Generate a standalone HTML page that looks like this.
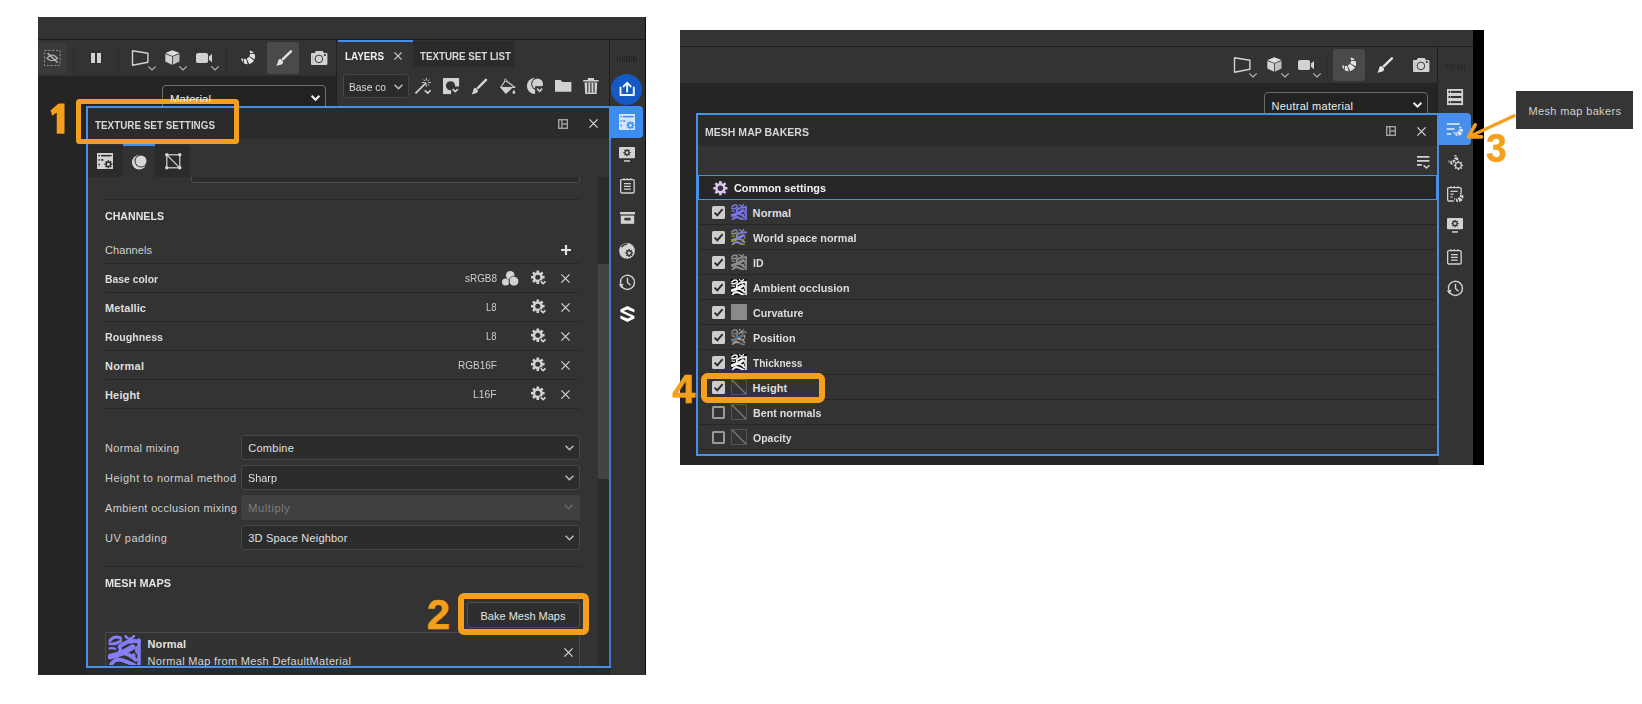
<!DOCTYPE html>
<html>
<head>
<meta charset="utf-8">
<title>Bake mesh maps</title>
<style>
html,body{margin:0;padding:0;background:#fff;}
body{width:1642px;height:704px;position:relative;overflow:hidden;font-family:"Liberation Sans",sans-serif;font-size:11px;color:#ccc;}
.a{position:absolute;}
.t{position:absolute;white-space:nowrap;line-height:14px;height:14px;font-size:11px;color:#cfcfcf;}
.b{font-weight:bold;}
svg{position:absolute;overflow:visible;}
.dd{position:absolute;box-sizing:border-box;background:#2b2b2b;border:1px solid #474747;border-radius:3px;}
.or{position:absolute;box-sizing:border-box;border:5px solid #f5a01d;border-radius:5px;}
.num{position:absolute;color:#f5a01d;font-weight:bold;white-space:nowrap;}
</style>
</head>
<body>
<!-- ================= LEFT SCREENSHOT ================= -->
<div class="a" style="left:38px;top:17px;width:608px;height:658px;background:#252525;"></div>
<div class="a" style="left:38px;top:17px;width:608px;height:23px;background:#333333;"></div>
<div class="a" style="left:38px;top:39px;width:608px;height:1px;background:#1c1c1c;"></div>
<div class="a" style="left:38px;top:40px;width:299px;height:36px;background:#333333;"></div>
<div class="a" style="left:337px;top:40px;width:273px;height:67px;background:#333333;"></div>
<div class="a" style="left:336px;top:40px;width:1px;height:67px;background:#202020;"></div>
<div class="a" style="left:610px;top:40px;width:36px;height:635px;background:#333333;"></div>
<div class="a" style="left:609px;top:40px;width:1px;height:67px;background:#1e1e1e;"></div>
<div class="a" style="left:645px;top:17px;width:1px;height:658px;background:#0c0c0c;"></div>
<div class="a" style="left:38px;top:42px;width:29px;height:32px;background:#3a3a3a;border-radius:0 3px 3px 0;"></div>
<svg style="left:44px;top:50px;" width="17" height="16" viewBox="0 0 17 16"><rect x="0.5" y="0.5" width="15.6" height="15" fill="none" stroke="#8c8c8c" stroke-width="1" stroke-dasharray="2.2 1.6"/><path d="M3 8.2 Q8.2 2.2 13.4 8.2 Q8.2 13 3 8.2 Z" fill="none" stroke="#adadad" stroke-width="1.3"/><path d="M3.6 3.2 L13.6 12.6" stroke="#bdbdbd" stroke-width="1.4"/></svg>
<div class="a" style="left:73px;top:47px;width:1px;height:24px;background:#2a2a2a;"></div>
<div class="a" style="left:91px;top:53px;width:4px;height:10px;background:#d2d2d2;"></div>
<div class="a" style="left:97px;top:53px;width:4px;height:10px;background:#d2d2d2;"></div>
<div class="a" style="left:118px;top:47px;width:1px;height:24px;background:#2a2a2a;"></div>
<svg style="left:131px;top:50px;" width="18" height="16" viewBox="0 0 18 16"><path d="M1.5 0.8 L16.9 3.3 L16.9 12.3 L1.5 15.2 Z" fill="none" stroke="#d2d2d2" stroke-width="1.4" stroke-linejoin="round"/></svg>
<svg style="left:148px;top:66px;" width="8" height="4.5" viewBox="0 0 8 4.5"><path d="M0.3 0.3 L4 4 L7.7 0.3" fill="none" stroke="#b8b8b8" stroke-width="1.1"/></svg>
<svg style="left:165px;top:50px;" width="15" height="15" viewBox="0 0 15 15"><path d="M7.4 0.3 L14.5 3.1 L7.4 5.9 L0.3 3.1 Z" fill="#dedede"/><path d="M0.3 3.9 L7 6.6 L7 14.7 L0.3 11.5 Z" fill="#d2d2d2"/><path d="M14.5 3.9 L7.8 6.6 L7.8 14.7 L14.5 11.5 Z" fill="#c0c0c0"/></svg>
<svg style="left:179.4px;top:66px;" width="8" height="4.5" viewBox="0 0 8 4.5"><path d="M0.3 0.3 L4 4 L7.7 0.3" fill="none" stroke="#b8b8b8" stroke-width="1.1"/></svg>
<svg style="left:196px;top:52px;" width="17" height="12" viewBox="0 0 17 12"><rect x="0" y="0.9" width="12.1" height="10.2" rx="2.2" fill="#d2d2d2"/><path d="M13 4.6 L16 2 V10.2 L13 7.8 Z" fill="#d2d2d2"/></svg>
<svg style="left:211.2px;top:66px;" width="8" height="4.5" viewBox="0 0 8 4.5"><path d="M0.3 0.3 L4 4 L7.7 0.3" fill="none" stroke="#b8b8b8" stroke-width="1.1"/></svg>
<div class="a" style="left:225.5px;top:47px;width:1px;height:24px;background:#2a2a2a;"></div>
<svg style="left:240px;top:50px;" width="15" height="15" viewBox="0 0 15 15"><path d="M9.44 0.77 L9.62 1.13 L9.77 1.50 L9.89 1.88 L9.98 2.27 L10.05 2.66 L10.09 3.06 L13.84 2.83 L13.33 2.22 L12.75 1.70 L12.09 1.26 L11.36 0.92 L10.54 0.72 L9.44 0.77 Z" fill="#e2e2e2"/><path d="M10.09 3.74 L10.05 4.16 L9.97 4.58 L9.87 4.99 L9.73 5.39 L9.57 5.78 L9.37 6.16 L14.66 9.15 L14.91 8.29 L15.05 7.41 L15.07 6.53 L14.99 5.66 L14.81 4.82 L14.51 4.01 Z" fill="#e2e2e2"/><path d="M9.00 6.73 L8.69 7.11 L8.35 7.46 L7.99 7.78 L7.59 8.07 L7.17 8.32 L6.73 8.54 L9.13 14.04 L10.12 13.75 L11.07 13.33 L11.96 12.77 L12.76 12.10 L13.46 11.33 L14.05 10.47 Z" fill="#e2e2e2"/><path d="M6.09 8.77 L5.76 8.86 L5.42 8.92 L5.09 8.97 L4.74 8.99 L4.40 9.00 L4.06 8.98 L3.74 13.03 L4.33 13.39 L4.95 13.68 L5.61 13.92 L6.29 14.08 L6.99 14.18 L7.70 14.20 Z" fill="#e2e2e2"/><path d="M3.38 8.89 L3.06 8.81 L2.74 8.72 L2.42 8.60 L2.12 8.47 L1.82 8.32 L1.53 8.15 L1.53 8.15 L1.40 9.09 L1.49 9.81 L1.68 10.47 L1.96 11.07 L2.31 11.63 L2.72 12.14 Z" fill="#e2e2e2"/></svg>
<div class="a" style="left:267px;top:42px;width:32px;height:32px;background:#4a4a4a;border-radius:3px;"></div>
<svg style="left:276px;top:50px;" width="16" height="16" viewBox="0 0 16 16"><path d="M14.9 1.3 L6.9 9.1" stroke="#e2e2e2" stroke-width="2.5" stroke-linecap="round"/><path d="M4.6 9.0 C3.4 8.9 2.3 9.7 2.1 11 C1.9 12.6 1.3 14.2 0.3 15.8 C2 15.4 3.8 15 5.4 14.5 C6.8 14 7.3 12.6 6.9 11.3 Z" fill="#e2e2e2"/></svg>
<svg style="left:311px;top:51px;" width="17" height="15" viewBox="0 0 17 15"><path d="M1 2.1 H3.8 L4.7 0 H11.8 L12.7 2.1 H15.4 Q16.4 2.1 16.4 3.1 V13.1 Q16.4 14.1 15.4 14.1 H1 Q0 14.1 0 13.1 V3.1 Q0 2.1 1 2.1 Z" fill="#d2d2d2"/><circle cx="7.9" cy="7.9" r="3.8" fill="none" stroke="#3a3a3a" stroke-width="1"/><rect x="12.9" y="3.1" width="1.9" height="1.8" fill="#333"/><rect x="1.3" y="4.4" width="0.9" height="8" fill="#b4b4b4"/></svg>
<div class="a" style="left:338px;top:40px;width:75px;height:2px;background:#4690ec;"></div>
<div class="t b" style="left:345.0px;top:49.0px;font-size:11px;transform:scaleX(0.8943);transform-origin:0 50%;color:#f0f0f0;">LAYERS</div>
<svg style="left:394px;top:52px;" width="8" height="8" viewBox="0 0 8 8"><path d="M0.4 0.4 L7.6 7.6 M7.6 0.4 L0.4 7.6" fill="none" stroke="#d0d0d0" stroke-width="1.2"/></svg>
<div class="a" style="left:413px;top:41px;width:101px;height:26px;background:#2b2b2b;"></div>
<div class="t b" style="left:420.0px;top:49.0px;font-size:11px;transform:scaleX(0.8863);transform-origin:0 50%;color:#d8d8d8;">TEXTURE SET LIST</div>
<div class="a" style="left:617px;top:56px;width:21px;height:6px;background:repeating-linear-gradient(90deg,#252525 0,#252525 1.1px,transparent 1.1px,transparent 2.35px);"></div>
<div class="dd" style="left:342.5px;top:73.5px;width:66.5px;height:24.6px;border-color:#454545;"></div>
<div class="t" style="left:349.0px;top:80.0px;font-size:11px;transform:scaleX(0.9309);transform-origin:0 50%;color:#dcdcdc;">Base co</div>
<svg style="left:394px;top:84px;" width="9" height="6" viewBox="0 0 9 6"><path d="M0.6 0.8 L4.5 4.7 L8.4 0.8" fill="none" stroke="#bdbdbd" stroke-width="1.6"/></svg>
<svg style="left:415px;top:78px;" width="17" height="17" viewBox="0 0 17 17"><path d="M0.5 15.4 L11.2 4.7" stroke="#d2d2d2" stroke-width="1.7"/><path d="M11.30 2.60 L11.30 0.00 M12.78 3.02 L14.13 1.67 M13.20 4.50 L15.80 4.50 M12.78 5.98 L14.13 7.33 M11.30 6.40 L11.30 9.00 M9.82 3.02 L8.47 1.67 M9.40 4.50 L6.80 4.50" stroke="#d2d2d2" stroke-width="0.95"/><path d="M9.8 12.4 L12.7 15.1 L15.6 12.4" stroke="#d2d2d2" stroke-width="1.7" fill="none"/></svg>
<svg style="left:443px;top:78px;" width="16" height="16" viewBox="0 0 16 16"><rect x="0" y="0" width="16.1" height="16.1" fill="#d2d2d2"/><circle cx="7.55" cy="7.75" r="4.6" fill="#333"/><rect x="8.1" y="8.5" width="8.2" height="7.8" fill="#333"/><path d="M9.6 11.1 L12.2 13.6 L14.8 11.1" stroke="#d2d2d2" stroke-width="1.6" fill="none"/></svg>
<svg style="left:471px;top:79px;" width="16" height="16" viewBox="0 0 16 16"><path d="M15 0.9 L7 8.9" stroke="#d2d2d2" stroke-width="2.5" stroke-linecap="round"/><path d="M4.8 8.8 C3.6 8.7 2.6 9.5 2.4 10.8 C2.2 12.4 1.6 13.8 0.6 15.4 C2.2 15 3.8 14.6 5.4 14.1 C6.7 13.6 7.2 12.3 6.8 11 Z" fill="#d2d2d2"/></svg>
<svg style="left:499.6px;top:79px;" width="17" height="16" viewBox="0 0 17 16"><path d="M0.7 8.5 L5.5 1.3 L15.1 8.5" fill="none" stroke="#d2d2d2" stroke-width="1.15" stroke-linejoin="miter"/><path d="M0.4 8.45 H15.2" stroke="#d2d2d2" stroke-width="1"/><path d="M0.3 8.5 H12.8 L5.8 15.1 Z" fill="#d2d2d2"/><path d="M5.5 -0.2 L6.9 1.2 L5.5 2.6 L4.1 1.2 Z" fill="#333" stroke="#d2d2d2" stroke-width="0.9"/><path d="M13.9 10.8 C14.7 12.2 15.3 12.8 15.3 13.5 A1.4 1.4 0 0 1 12.5 13.5 C12.5 12.8 13.1 12.2 13.9 10.8 Z" fill="#d2d2d2"/></svg>
<svg style="left:526px;top:78px;" width="18" height="17" viewBox="0 0 18 17"><defs><mask id="sm1"><rect x="-2" y="-2" width="24" height="24" fill="#fff"/><circle cx="11.6" cy="6" r="6.4" fill="#000"/><rect x="9.1" y="8.2" width="12" height="12" fill="#000"/></mask><mask id="sm2"><rect x="-2" y="-2" width="24" height="24" fill="#fff"/><rect x="9.1" y="8.2" width="12" height="12" fill="#000"/></mask></defs><circle cx="8.9" cy="8" r="8" fill="#d2d2d2" mask="url(#sm1)"/><circle cx="11.6" cy="6" r="5.4" fill="#d2d2d2" mask="url(#sm2)"/><path d="M11.1 10.6 L13.6 13.3 L16.1 10.6" stroke="#d2d2d2" stroke-width="1.6" fill="none"/></svg>
<svg style="left:555px;top:80px;" width="17" height="12" viewBox="0 0 17 12"><path d="M0 0 H5.6 L7.4 2 H16.4 V11.8 H0 Z" fill="#d2d2d2"/></svg>
<svg style="left:583.4px;top:78px;" width="16" height="16" viewBox="0 0 16 16"><path d="M4.8 0 H11 V2 H15.6 V3.6 H0.2 V2 H4.8 Z" fill="#d2d2d2"/><path d="M1.6 4.4 H14.2 L13.6 16 H2.2 Z" fill="#d2d2d2"/><path d="M4.8 5 V14.8 M7.9 5 V14.8 M11 5 V14.8" stroke="#333" stroke-width="1.2"/></svg>
<div class="a" style="left:611px;top:74px;width:31px;height:31px;border-radius:50%;background:#1459c4;"></div>
<svg style="left:619px;top:80px;" width="17" height="18" viewBox="0 0 17 18"><path d="M1.5 6.8 V15 H14.8 V6.8" fill="none" stroke="#f4f4f4" stroke-width="1.9"/><path d="M8.15 12.4 V3.4" stroke="#f4f4f4" stroke-width="1.9"/><path d="M4 7 L8.15 2.8 L12.3 7" fill="none" stroke="#f4f4f4" stroke-width="1.9"/></svg>
<div class="dd" style="left:162px;top:85px;width:164px;height:30px;background:#222;border-color:#727272;border-radius:4px;"></div>
<svg style="left:310.5px;top:95px;" width="9" height="6" viewBox="0 0 9 6"><path d="M0.6 0.8 L4.5 4.7 L8.4 0.8" fill="none" stroke="#f4f4f4" stroke-width="2.1"/></svg>
<div class="a" style="left:86px;top:106px;width:525px;height:562px;background:#4690ec;"></div>
<div class="a" style="left:88px;top:108px;width:521px;height:558px;background:#333333;"></div>
<div class="a" style="left:88px;top:108px;width:521px;height:31px;background:#2b2b2b;"></div>
<div class="t b" style="left:95.0px;top:117.5px;font-size:11px;transform:scaleX(0.8965);transform-origin:0 50%;color:#d6d6d6;">TEXTURE SET SETTINGS</div>
<svg style="left:558px;top:119px;" width="10" height="10" viewBox="0 0 10 10"><rect x="0.7" y="0.7" width="8.6" height="8.6" fill="none" stroke="#a2a2a2" stroke-width="1.4"/><path d="M3.9 0.7 V9.3 M3.9 5 H9.3" stroke="#a2a2a2" stroke-width="1.4"/></svg>
<svg style="left:589px;top:119px;" width="9" height="9" viewBox="0 0 9 9"><path d="M0.4 0.4 L8.6 8.6 M8.6 0.4 L0.4 8.6" fill="none" stroke="#d8d8d8" stroke-width="1.2"/></svg>
<div class="a" style="left:609px;top:106px;width:34px;height:32px;background:#3d8df0;border-radius:0 4px 4px 0;"></div>
<svg style="left:619px;top:114px;" width="16" height="16" viewBox="0 0 16 16"><rect x="0" y="0" width="16" height="16" fill="#d4e4fa"/><rect x="1.4" y="1.9" width="1.5" height="1.5" fill="#3d8df0"/><rect x="4" y="1.9" width="10.6" height="1.5" fill="#3d8df0"/><rect x="1.4" y="6.2" width="1.5" height="1.5" fill="#3d8df0"/><rect x="4" y="6.2" width="2.4" height="1.5" fill="#3d8df0"/><rect x="1.4" y="10.8" width="1.5" height="1.5" fill="#3d8df0"/><path d="M14.20 10.46 L15.42 10.40 L15.42 12.00 L14.20 11.94 L13.91 12.66 L14.81 13.48 L13.68 14.61 L12.86 13.71 L12.14 14.00 L12.20 15.22 L10.60 15.22 L10.66 14.00 L9.94 13.71 L9.12 14.61 L7.99 13.48 L8.89 12.66 L8.60 11.94 L7.38 12.00 L7.38 10.40 L8.60 10.46 L8.89 9.74 L7.99 8.92 L9.12 7.79 L9.94 8.69 L10.66 8.40 L10.60 7.18 L12.20 7.18 L12.14 8.40 L12.86 8.69 L13.68 7.79 L14.81 8.92 L13.91 9.74 Z" fill="#3d8df0"/><circle cx="11.4" cy="11.2" r="1.5" fill="#d4e4fa"/></svg>
<div class="a" style="left:88px;top:145px;width:35px;height:32px;background:#2b2b2b;"></div>
<div class="a" style="left:155px;top:145px;width:35px;height:32px;background:#2b2b2b;"></div>
<div class="a" style="left:123px;top:144px;width:32px;height:2px;background:#4690ec;"></div>
<svg style="left:97px;top:153px;" width="16" height="16" viewBox="0 0 16 16"><rect x="0" y="0" width="16" height="16" fill="#d2d2d2"/><rect x="1.4" y="1.9" width="1.5" height="1.5" fill="#2b2b2b"/><rect x="4" y="1.9" width="10.6" height="1.5" fill="#2b2b2b"/><rect x="1.4" y="6.2" width="1.5" height="1.5" fill="#2b2b2b"/><rect x="4" y="6.2" width="2.4" height="1.5" fill="#2b2b2b"/><rect x="1.4" y="10.8" width="1.5" height="1.5" fill="#2b2b2b"/><path d="M14.20 10.46 L15.42 10.40 L15.42 12.00 L14.20 11.94 L13.91 12.66 L14.81 13.48 L13.68 14.61 L12.86 13.71 L12.14 14.00 L12.20 15.22 L10.60 15.22 L10.66 14.00 L9.94 13.71 L9.12 14.61 L7.99 13.48 L8.89 12.66 L8.60 11.94 L7.38 12.00 L7.38 10.40 L8.60 10.46 L8.89 9.74 L7.99 8.92 L9.12 7.79 L9.94 8.69 L10.66 8.40 L10.60 7.18 L12.20 7.18 L12.14 8.40 L12.86 8.69 L13.68 7.79 L14.81 8.92 L13.91 9.74 Z" fill="#2b2b2b"/><circle cx="11.4" cy="11.2" r="1.5" fill="#d2d2d2"/></svg>
<svg style="left:131px;top:153px;" width="17" height="17" viewBox="0 0 17 17"><defs><mask id="mm"><rect x="-2" y="-2" width="22" height="22" fill="#fff"/><circle cx="10" cy="8" r="6.5" fill="#000"/></mask></defs><circle cx="8.2" cy="9.3" r="7.2" fill="#d8d8d8" mask="url(#mm)"/><circle cx="10" cy="8" r="5.5" fill="#d8d8d8"/></svg>
<svg style="left:165px;top:153px;" width="17" height="17" viewBox="0 0 17 17"><rect x="1.8" y="1.8" width="13" height="13" fill="none" stroke="#d8d8d8" stroke-width="1.2"/><path d="M1.8 1.8 L14.8 14.8" stroke="#d8d8d8" stroke-width="1.2"/><circle cx="1.8" cy="1.8" r="1.7" fill="#d8d8d8"/><circle cx="1.8" cy="14.8" r="1.7" fill="#d8d8d8"/><circle cx="14.8" cy="1.8" r="1.7" fill="#d8d8d8"/><circle cx="14.8" cy="14.8" r="1.7" fill="#d8d8d8"/></svg>
<div class="a" style="left:191px;top:160px;width:389px;height:23px;box-sizing:border-box;border:1px solid #4c4c4c;border-radius:3px;background:#2b2b2b;clip-path:inset(17px 0 0 0);"></div>
<div class="a" style="left:598px;top:177px;width:11px;height:489px;background:#2b2b2b;"></div>
<div class="a" style="left:598px;top:264px;width:10.5px;height:215px;background:#434343;"></div>
<div class="a" style="left:609px;top:140px;width:2px;height:526px;background:#4278cc;"></div>
<div class="a" style="left:105px;top:199px;width:475px;height:1px;background:#282828;"></div>
<div class="t b" style="left:105.0px;top:209.0px;font-size:11px;transform:scaleX(0.9654);transform-origin:0 50%;color:#e4e4e4;">CHANNELS</div>
<div class="t" style="left:105.0px;top:243.0px;font-size:11px;letter-spacing:0.07px;color:#d0d0d0;">Channels</div>
<svg style="left:561px;top:244.5px;" width="10" height="10" viewBox="0 0 10 10"><path d="M5 0 V10 M0 5 H10" stroke="#e0e0e0" stroke-width="2.2" fill="none"/></svg>
<div class="a" style="left:105px;top:263px;width:475px;height:1px;background:#282828;"></div>
<div class="t b" style="left:105.0px;top:272.0px;font-size:11px;transform:scaleX(0.9422);transform-origin:0 50%;color:#dedede;">Base color</div>
<div class="t" style="left:464.5px;top:271.0px;font-size:11px;transform:scaleX(0.9025);transform-origin:0 50%;color:#cfcfcf;">sRGB8</div>
<svg style="left:531px;top:271px;" width="15" height="14" viewBox="0 0 15 14"><path d="M11.63 4.92 L13.57 4.85 L13.57 7.55 L11.63 7.48 L11.12 8.71 L12.54 10.03 L10.63 11.94 L9.31 10.52 L8.08 11.03 L8.15 12.97 L5.45 12.97 L5.52 11.03 L4.29 10.52 L2.97 11.94 L1.06 10.03 L2.48 8.71 L1.97 7.48 L0.03 7.55 L0.03 4.85 L1.97 4.92 L2.48 3.69 L1.06 2.37 L2.97 0.46 L4.29 1.88 L5.52 1.37 L5.45 -0.57 L8.15 -0.57 L8.08 1.37 L9.31 1.88 L10.63 0.46 L12.54 2.37 L11.12 3.69 Z" fill="#d2d2d2"/><circle cx="6.8" cy="6.2" r="2.5" fill="#333"/><rect x="8.6" y="9.3" width="7" height="5" fill="#333"/><path d="M9.7 10.4 L12.1 12.7 L14.5 10.4" stroke="#d2d2d2" stroke-width="1.6" fill="none"/></svg>
<svg style="left:561px;top:274px;" width="9" height="9" viewBox="0 0 9 9"><path d="M0.4 0.4 L8.6 8.6 M8.6 0.4 L0.4 8.6" fill="none" stroke="#d4d4d4" stroke-width="1.2"/></svg>
<div class="a" style="left:105px;top:292px;width:475px;height:1px;background:#282828;"></div>
<div class="t b" style="left:105.0px;top:301.0px;font-size:11px;letter-spacing:0.09px;color:#dedede;">Metallic</div>
<div class="t" style="left:486.0px;top:300.0px;font-size:11px;transform:scaleX(0.8581);transform-origin:0 50%;color:#cfcfcf;">L8</div>
<svg style="left:531px;top:300px;" width="15" height="14" viewBox="0 0 15 14"><path d="M11.63 4.92 L13.57 4.85 L13.57 7.55 L11.63 7.48 L11.12 8.71 L12.54 10.03 L10.63 11.94 L9.31 10.52 L8.08 11.03 L8.15 12.97 L5.45 12.97 L5.52 11.03 L4.29 10.52 L2.97 11.94 L1.06 10.03 L2.48 8.71 L1.97 7.48 L0.03 7.55 L0.03 4.85 L1.97 4.92 L2.48 3.69 L1.06 2.37 L2.97 0.46 L4.29 1.88 L5.52 1.37 L5.45 -0.57 L8.15 -0.57 L8.08 1.37 L9.31 1.88 L10.63 0.46 L12.54 2.37 L11.12 3.69 Z" fill="#d2d2d2"/><circle cx="6.8" cy="6.2" r="2.5" fill="#333"/><rect x="8.6" y="9.3" width="7" height="5" fill="#333"/><path d="M9.7 10.4 L12.1 12.7 L14.5 10.4" stroke="#d2d2d2" stroke-width="1.6" fill="none"/></svg>
<svg style="left:561px;top:303px;" width="9" height="9" viewBox="0 0 9 9"><path d="M0.4 0.4 L8.6 8.6 M8.6 0.4 L0.4 8.6" fill="none" stroke="#d4d4d4" stroke-width="1.2"/></svg>
<div class="a" style="left:105px;top:321px;width:475px;height:1px;background:#282828;"></div>
<div class="t b" style="left:105.0px;top:330.0px;font-size:11px;transform:scaleX(0.9683);transform-origin:0 50%;color:#dedede;">Roughness</div>
<div class="t" style="left:486.0px;top:329.0px;font-size:11px;transform:scaleX(0.8581);transform-origin:0 50%;color:#cfcfcf;">L8</div>
<svg style="left:531px;top:329px;" width="15" height="14" viewBox="0 0 15 14"><path d="M11.63 4.92 L13.57 4.85 L13.57 7.55 L11.63 7.48 L11.12 8.71 L12.54 10.03 L10.63 11.94 L9.31 10.52 L8.08 11.03 L8.15 12.97 L5.45 12.97 L5.52 11.03 L4.29 10.52 L2.97 11.94 L1.06 10.03 L2.48 8.71 L1.97 7.48 L0.03 7.55 L0.03 4.85 L1.97 4.92 L2.48 3.69 L1.06 2.37 L2.97 0.46 L4.29 1.88 L5.52 1.37 L5.45 -0.57 L8.15 -0.57 L8.08 1.37 L9.31 1.88 L10.63 0.46 L12.54 2.37 L11.12 3.69 Z" fill="#d2d2d2"/><circle cx="6.8" cy="6.2" r="2.5" fill="#333"/><rect x="8.6" y="9.3" width="7" height="5" fill="#333"/><path d="M9.7 10.4 L12.1 12.7 L14.5 10.4" stroke="#d2d2d2" stroke-width="1.6" fill="none"/></svg>
<svg style="left:561px;top:332px;" width="9" height="9" viewBox="0 0 9 9"><path d="M0.4 0.4 L8.6 8.6 M8.6 0.4 L0.4 8.6" fill="none" stroke="#d4d4d4" stroke-width="1.2"/></svg>
<div class="a" style="left:105px;top:350px;width:475px;height:1px;background:#282828;"></div>
<div class="t b" style="left:105.0px;top:359.0px;font-size:11px;letter-spacing:0.22px;color:#dedede;">Normal</div>
<div class="t" style="left:457.5px;top:358.0px;font-size:11px;transform:scaleX(0.9113);transform-origin:0 50%;color:#cfcfcf;">RGB16F</div>
<svg style="left:531px;top:358px;" width="15" height="14" viewBox="0 0 15 14"><path d="M11.63 4.92 L13.57 4.85 L13.57 7.55 L11.63 7.48 L11.12 8.71 L12.54 10.03 L10.63 11.94 L9.31 10.52 L8.08 11.03 L8.15 12.97 L5.45 12.97 L5.52 11.03 L4.29 10.52 L2.97 11.94 L1.06 10.03 L2.48 8.71 L1.97 7.48 L0.03 7.55 L0.03 4.85 L1.97 4.92 L2.48 3.69 L1.06 2.37 L2.97 0.46 L4.29 1.88 L5.52 1.37 L5.45 -0.57 L8.15 -0.57 L8.08 1.37 L9.31 1.88 L10.63 0.46 L12.54 2.37 L11.12 3.69 Z" fill="#d2d2d2"/><circle cx="6.8" cy="6.2" r="2.5" fill="#333"/><rect x="8.6" y="9.3" width="7" height="5" fill="#333"/><path d="M9.7 10.4 L12.1 12.7 L14.5 10.4" stroke="#d2d2d2" stroke-width="1.6" fill="none"/></svg>
<svg style="left:561px;top:361px;" width="9" height="9" viewBox="0 0 9 9"><path d="M0.4 0.4 L8.6 8.6 M8.6 0.4 L0.4 8.6" fill="none" stroke="#d4d4d4" stroke-width="1.2"/></svg>
<div class="a" style="left:105px;top:379px;width:475px;height:1px;background:#282828;"></div>
<div class="t b" style="left:105.0px;top:388.0px;font-size:11px;letter-spacing:0.16px;color:#dedede;">Height</div>
<div class="t" style="left:473.0px;top:387.0px;font-size:11px;transform:scaleX(0.9372);transform-origin:0 50%;color:#cfcfcf;">L16F</div>
<svg style="left:531px;top:387px;" width="15" height="14" viewBox="0 0 15 14"><path d="M11.63 4.92 L13.57 4.85 L13.57 7.55 L11.63 7.48 L11.12 8.71 L12.54 10.03 L10.63 11.94 L9.31 10.52 L8.08 11.03 L8.15 12.97 L5.45 12.97 L5.52 11.03 L4.29 10.52 L2.97 11.94 L1.06 10.03 L2.48 8.71 L1.97 7.48 L0.03 7.55 L0.03 4.85 L1.97 4.92 L2.48 3.69 L1.06 2.37 L2.97 0.46 L4.29 1.88 L5.52 1.37 L5.45 -0.57 L8.15 -0.57 L8.08 1.37 L9.31 1.88 L10.63 0.46 L12.54 2.37 L11.12 3.69 Z" fill="#d2d2d2"/><circle cx="6.8" cy="6.2" r="2.5" fill="#333"/><rect x="8.6" y="9.3" width="7" height="5" fill="#333"/><path d="M9.7 10.4 L12.1 12.7 L14.5 10.4" stroke="#d2d2d2" stroke-width="1.6" fill="none"/></svg>
<svg style="left:561px;top:390px;" width="9" height="9" viewBox="0 0 9 9"><path d="M0.4 0.4 L8.6 8.6 M8.6 0.4 L0.4 8.6" fill="none" stroke="#d4d4d4" stroke-width="1.2"/></svg>
<svg style="left:502px;top:271px;" width="17" height="15" viewBox="0 0 17 15"><circle cx="8.2" cy="4.3" r="4.3" fill="#d2d2d2"/><circle cx="3.6" cy="11" r="3.6" fill="#d2d2d2"/><circle cx="12" cy="10.2" r="4.5" fill="#d2d2d2"/><circle cx="12" cy="10.2" r="5.1" fill="none" stroke="#333" stroke-width="0.7"/><path d="M3.7 4.3 A4.5 4.5 0 0 0 6 8.2" fill="none" stroke="#333" stroke-width="0"/></svg>
<div class="a" style="left:105px;top:408px;width:475px;height:1px;background:#282828;"></div>
<div class="t" style="left:105.0px;top:440.5px;font-size:11px;letter-spacing:0.31px;color:#d0d0d0;">Normal mixing</div>
<div class="dd" style="left:241px;top:434.5px;width:339px;height:25.5px;background:#2c2c2c;"></div>
<div class="t" style="left:248.3px;top:440.5px;font-size:11px;letter-spacing:0.25px;color:#e0e0e0;">Combine</div>
<svg style="left:564.5px;top:444.5px;" width="9" height="6" viewBox="0 0 9 6"><path d="M0.6 0.8 L4.5 4.7 L8.4 0.8" fill="none" stroke="#bcbcbc" stroke-width="1.5"/></svg>
<div class="t" style="left:105.0px;top:470.5px;font-size:11px;letter-spacing:0.48px;color:#d0d0d0;">Height to normal method</div>
<div class="dd" style="left:241px;top:464.5px;width:339px;height:25.5px;background:#2c2c2c;"></div>
<div class="t" style="left:248.3px;top:470.5px;font-size:11px;transform:scaleX(0.9879);transform-origin:0 50%;color:#e0e0e0;">Sharp</div>
<svg style="left:564.5px;top:474.5px;" width="9" height="6" viewBox="0 0 9 6"><path d="M0.6 0.8 L4.5 4.7 L8.4 0.8" fill="none" stroke="#bcbcbc" stroke-width="1.5"/></svg>
<div class="t" style="left:105.0px;top:500.5px;font-size:11px;letter-spacing:0.34px;color:#d0d0d0;">Ambient occlusion mixing</div>
<div class="dd" style="left:241px;top:494.5px;width:339px;height:25.5px;background:#404040;border-color:#404040;"></div>
<div class="t" style="left:248.3px;top:500.5px;font-size:11px;letter-spacing:0.60px;color:#7e7e7e;">Multiply</div>
<svg style="left:564px;top:504px;" width="9" height="6" viewBox="0 0 9 6"><path d="M0.6 0.8 L4.5 4.7 L8.4 0.8" fill="none" stroke="#686868" stroke-width="1.6"/></svg>
<div class="t" style="left:105.0px;top:530.5px;font-size:11px;letter-spacing:0.50px;color:#d0d0d0;">UV padding</div>
<div class="dd" style="left:241px;top:524.5px;width:339px;height:25.5px;background:#2c2c2c;"></div>
<div class="t" style="left:248.3px;top:530.5px;font-size:11px;letter-spacing:0.19px;color:#e0e0e0;">3D Space Neighbor</div>
<svg style="left:564.5px;top:534.5px;" width="9" height="6" viewBox="0 0 9 6"><path d="M0.6 0.8 L4.5 4.7 L8.4 0.8" fill="none" stroke="#bcbcbc" stroke-width="1.5"/></svg>
<div class="a" style="left:105px;top:566px;width:475px;height:1px;background:#282828;"></div>
<div class="t b" style="left:105.0px;top:576.0px;font-size:11px;transform:scaleX(0.9907);transform-origin:0 50%;color:#e4e4e4;">MESH MAPS</div>
<div class="dd" style="left:467px;top:602px;width:113px;height:26px;border-color:#4e4e4e;background:#2e2e2e;"></div>
<div class="t" style="left:480.5px;top:609.0px;font-size:11px;letter-spacing:0.00px;color:#e4e4e4;">Bake Mesh Maps</div>
<div class="a" style="left:105px;top:632px;width:475px;height:40px;box-sizing:border-box;border:1px solid #4a4a4a;background:#323232;"></div>
<svg style="left:108px;top:635px;overflow:hidden;" width="33" height="30" viewBox="0 0 33 30"><g transform="scale(1.0000 1.0000)" fill="none" stroke="#857ef6" stroke-linecap="round"><path d="M1.8 5.6 Q6 0.4 12 2.6" stroke-width="3.0"/><path d="M1.6 8.6 Q7 9.8 12.6 6.2" stroke-width="2.8"/><path d="M12 2.6 Q13.6 4.4 12.6 6.2" stroke-width="2.4"/><path d="M17.6 1.2 Q21.4 6.8 26 1" stroke-width="2.5"/><path d="M21.6 4.4 Q22 6 23 7.4" stroke-width="2.4"/><path d="M12.6 10.6 Q21 4.6 31 6.4" stroke-width="3.8"/><path d="M31 5 V30" stroke-width="3.4"/><path d="M28.4 12 Q27.6 15 28.6 17.6" stroke-width="2.2"/><path d="M2.4 21.6 Q13 19.6 24.6 12.2" stroke-width="5.6"/><path d="M11.4 11.4 Q14 15.6 9 21" stroke-width="3.4"/><path d="M16 18.4 Q22 19.4 27.6 24.8" stroke-width="3.6"/><path d="M3 29.6 Q7.4 22.6 15 25.4 T27 30.4" stroke-width="3.8"/><path d="M25.6 20.2 L25.8 20.6" stroke-width="3.6"/><path d="M1.6 13.4 Q4.6 12.6 7.2 13.8" stroke-width="2.2"/></g></svg>
<div class="t b" style="left:147.5px;top:637.0px;font-size:11px;letter-spacing:0.12px;color:#e0e0e0;">Normal</div>
<div class="t" style="left:147.5px;top:654.0px;font-size:11px;letter-spacing:0.33px;color:#d6d6d6;">Normal Map from Mesh DefaultMaterial</div>
<svg style="left:563.6px;top:647.6px;" width="9" height="9" viewBox="0 0 9 9"><path d="M0.4 0.4 L8.6 8.6 M8.6 0.4 L0.4 8.6" fill="none" stroke="#d8d8d8" stroke-width="1.2"/></svg>
<div class="a" style="left:86px;top:666px;width:525px;height:2px;background:#4690ec;"></div>
<div class="a" style="left:38px;top:668px;width:48px;height:7px;background:#252525;"></div>
<div class="a" style="left:86px;top:668px;width:523px;height:7px;background:#292929;"></div>
<svg style="left:619px;top:147.3px;" width="16" height="15" viewBox="0 0 16 15"><rect x="0" y="0" width="16" height="11.3" rx="1" fill="#d2d2d2"/><path d="M10.51 4.93 L11.63 4.88 L11.63 6.32 L10.51 6.27 L10.25 6.91 L11.08 7.66 L10.06 8.68 L9.31 7.85 L8.67 8.11 L8.72 9.23 L7.28 9.23 L7.33 8.11 L6.69 7.85 L5.94 8.68 L4.92 7.66 L5.75 6.91 L5.49 6.27 L4.37 6.32 L4.37 4.88 L5.49 4.93 L5.75 4.29 L4.92 3.54 L5.94 2.52 L6.69 3.35 L7.33 3.09 L7.28 1.97 L8.72 1.97 L8.67 3.09 L9.31 3.35 L10.06 2.52 L11.08 3.54 L10.25 4.29 Z" fill="#333"/><circle cx="8" cy="5.6" r="1.4" fill="#d2d2d2"/><rect x="5" y="13.2" width="6" height="1.5" fill="#d2d2d2"/></svg>
<svg style="left:619.6px;top:178.4px;" width="15" height="16" viewBox="0 0 15 16"><rect x="0.65" y="1.6" width="13.5" height="13.4" rx="1.2" fill="none" stroke="#d2d2d2" stroke-width="1.3"/><path d="M4 0 V2 M7.4 0 V2 M10.8 0 V2" stroke="#d2d2d2" stroke-width="1.1"/><path d="M4 5.6 H10.8 M4 8.4 H10.8 M4 11.2 H10.8" stroke="#d2d2d2" stroke-width="1.3"/></svg>
<svg style="left:620px;top:212px;" width="15" height="12" viewBox="0 0 15 12"><rect x="0" y="0" width="15" height="2.4" fill="#d2d2d2"/><rect x="0.8" y="3.6" width="13.4" height="8.2" fill="#d2d2d2"/><rect x="4.4" y="5.8" width="6.2" height="2.6" fill="#333"/></svg>
<svg style="left:619px;top:242.5px;" width="16" height="16" viewBox="0 0 16 16"><circle cx="8" cy="7.8" r="7.9" fill="#d2d2d2"/><path d="M2.9 3.6 Q4.8 1.7 7.6 1.1" fill="none" stroke="#333" stroke-width="1.5" stroke-linecap="round"/><path d="M12.91 9.28 L14.12 9.22 L14.12 10.78 L12.91 10.72 L12.62 11.41 L13.53 12.22 L12.42 13.33 L11.61 12.42 L10.92 12.71 L10.98 13.92 L9.42 13.92 L9.48 12.71 L8.79 12.42 L7.98 13.33 L6.87 12.22 L7.78 11.41 L7.49 10.72 L6.28 10.78 L6.28 9.22 L7.49 9.28 L7.78 8.59 L6.87 7.78 L7.98 6.67 L8.79 7.58 L9.48 7.29 L9.42 6.08 L10.98 6.08 L10.92 7.29 L11.61 7.58 L12.42 6.67 L13.53 7.78 L12.62 8.59 Z" fill="#333"/><circle cx="10.2" cy="10" r="1.6" fill="#d2d2d2"/></svg>
<svg style="left:618.8px;top:273.6px;" width="17" height="17" viewBox="0 0 17 17"><path d="M2.5 12.4 A7.1 7.1 0 1 0 2.3 4.6" fill="none" stroke="#d2d2d2" stroke-width="1.4"/><path d="M2.3 4.6 A7.1 7.1 0 0 0 1.7 9.8" fill="none" stroke="#d2d2d2" stroke-width="1.4"/><path d="M-0.2 10.2 L4.6 9.8 L2.4 14.2 Z" fill="#d2d2d2"/><path d="M8.5 3.8 V8.5 L11.5 11.3" fill="none" stroke="#d2d2d2" stroke-width="1.4"/></svg>
<svg style="left:619.6px;top:306px;" width="15" height="16" viewBox="0 0 15 16"><path d="M7.4 0 L14.4 3.4 V6.6 L7.4 3.4 L3.6 5.1 L14.4 9.9 V12.6 L7.4 16 L0.4 12.6 V9.4 L7.4 12.6 L11.2 10.9 L0.4 6.1 V3.4 Z" fill="#ffffff"/></svg>
<div class="or" style="left:75.5px;top:99.4px;width:163.8px;height:44.4px;border-width:5.4px;border-radius:3.5px;filter:blur(0.7px);"></div>
<div class="t" style="left:170.0px;top:92.4px;font-size:11.5px;letter-spacing:0.01px;color:#f4f4f4;clip-path:inset(0 0 4.6px 0);">Material</div>
<svg style="left:50px;top:103px;" width="16" height="32" viewBox="0 0 16 32"><path d="M14.5 0.5 V30.75 H6.75 V9.6 L2.3 12.7 L0.5 7.4 L8.6 0.5 Z" fill="#f5a01d"/></svg>
<div class="or" style="left:457.8px;top:592.5px;width:131.1px;height:42.4px;border-width:6.4px;border-radius:6px;"></div>
<div class="num" style="left:426.7px;top:594.1px;font-size:42px;line-height:42px;-webkit-text-stroke:0.5px #f5a01d;">2</div>
<!-- ================= RIGHT SCREENSHOT ================= -->
<div class="a" style="left:680px;top:30px;width:804px;height:435px;background:#252525;"></div>
<div class="a" style="left:680px;top:30px;width:793px;height:17px;background:#333333;"></div>
<div class="a" style="left:680px;top:46px;width:793px;height:1px;background:#1e1e1e;"></div>
<div class="a" style="left:680px;top:47px;width:758px;height:36px;background:#333333;"></div>
<div class="a" style="left:1438px;top:47px;width:35px;height:418px;background:#333333;"></div>
<div class="a" style="left:1437px;top:47px;width:1px;height:66px;background:#1e1e1e;"></div>
<div class="a" style="left:1473px;top:30px;width:11px;height:435px;background:#000;"></div>
<svg style="left:1233px;top:57px;" width="18" height="16" viewBox="0 0 18 16"><path d="M1.5 0.8 L16.9 3.3 L16.9 12.3 L1.5 15.2 Z" fill="none" stroke="#d2d2d2" stroke-width="1.4" stroke-linejoin="round"/></svg>
<svg style="left:1249px;top:73px;" width="8" height="4.5" viewBox="0 0 8 4.5"><path d="M0.3 0.3 L4 4 L7.7 0.3" fill="none" stroke="#b8b8b8" stroke-width="1.1"/></svg>
<svg style="left:1266.5px;top:57.3px;" width="15" height="15" viewBox="0 0 15 15"><path d="M7.4 0.3 L14.5 3.1 L7.4 5.9 L0.3 3.1 Z" fill="#dedede"/><path d="M0.3 3.9 L7 6.6 L7 14.7 L0.3 11.5 Z" fill="#d2d2d2"/><path d="M14.5 3.9 L7.8 6.6 L7.8 14.7 L14.5 11.5 Z" fill="#c0c0c0"/></svg>
<svg style="left:1281px;top:73px;" width="8" height="4.5" viewBox="0 0 8 4.5"><path d="M0.3 0.3 L4 4 L7.7 0.3" fill="none" stroke="#b8b8b8" stroke-width="1.1"/></svg>
<svg style="left:1298px;top:59px;" width="17" height="12" viewBox="0 0 17 12"><rect x="0" y="0.9" width="12.1" height="10.2" rx="2.2" fill="#d2d2d2"/><path d="M13 4.6 L16 2 V10.2 L13 7.8 Z" fill="#d2d2d2"/></svg>
<svg style="left:1313px;top:73px;" width="8" height="4.5" viewBox="0 0 8 4.5"><path d="M0.3 0.3 L4 4 L7.7 0.3" fill="none" stroke="#b8b8b8" stroke-width="1.1"/></svg>
<div class="a" style="left:1326.5px;top:54px;width:1px;height:24px;background:#2c2c2c;"></div>
<div class="a" style="left:1333px;top:49px;width:32px;height:32px;background:#4a4a4a;border-radius:3px;"></div>
<svg style="left:1341px;top:57px;" width="15" height="15" viewBox="0 0 15 15"><path d="M9.44 0.77 L9.62 1.13 L9.77 1.50 L9.89 1.88 L9.98 2.27 L10.05 2.66 L10.09 3.06 L13.84 2.83 L13.33 2.22 L12.75 1.70 L12.09 1.26 L11.36 0.92 L10.54 0.72 L9.44 0.77 Z" fill="#e2e2e2"/><path d="M10.09 3.74 L10.05 4.16 L9.97 4.58 L9.87 4.99 L9.73 5.39 L9.57 5.78 L9.37 6.16 L14.66 9.15 L14.91 8.29 L15.05 7.41 L15.07 6.53 L14.99 5.66 L14.81 4.82 L14.51 4.01 Z" fill="#e2e2e2"/><path d="M9.00 6.73 L8.69 7.11 L8.35 7.46 L7.99 7.78 L7.59 8.07 L7.17 8.32 L6.73 8.54 L9.13 14.04 L10.12 13.75 L11.07 13.33 L11.96 12.77 L12.76 12.10 L13.46 11.33 L14.05 10.47 Z" fill="#e2e2e2"/><path d="M6.09 8.77 L5.76 8.86 L5.42 8.92 L5.09 8.97 L4.74 8.99 L4.40 9.00 L4.06 8.98 L3.74 13.03 L4.33 13.39 L4.95 13.68 L5.61 13.92 L6.29 14.08 L6.99 14.18 L7.70 14.20 Z" fill="#e2e2e2"/><path d="M3.38 8.89 L3.06 8.81 L2.74 8.72 L2.42 8.60 L2.12 8.47 L1.82 8.32 L1.53 8.15 L1.53 8.15 L1.40 9.09 L1.49 9.81 L1.68 10.47 L1.96 11.07 L2.31 11.63 L2.72 12.14 Z" fill="#e2e2e2"/></svg>
<svg style="left:1377px;top:57px;" width="16" height="16" viewBox="0 0 16 16"><path d="M14.9 1.3 L6.9 9.1" stroke="#e2e2e2" stroke-width="2.5" stroke-linecap="round"/><path d="M4.6 9.0 C3.4 8.9 2.3 9.7 2.1 11 C1.9 12.6 1.3 14.2 0.3 15.8 C2 15.4 3.8 15 5.4 14.5 C6.8 14 7.3 12.6 6.9 11.3 Z" fill="#e2e2e2"/></svg>
<svg style="left:1412.6px;top:58px;" width="17" height="15" viewBox="0 0 17 15"><path d="M1 2.1 H3.8 L4.7 0 H11.8 L12.7 2.1 H15.4 Q16.4 2.1 16.4 3.1 V13.1 Q16.4 14.1 15.4 14.1 H1 Q0 14.1 0 13.1 V3.1 Q0 2.1 1 2.1 Z" fill="#d2d2d2"/><circle cx="7.9" cy="7.9" r="3.8" fill="none" stroke="#3a3a3a" stroke-width="1"/><rect x="12.9" y="3.1" width="1.9" height="1.8" fill="#333"/><rect x="1.3" y="4.4" width="0.9" height="8" fill="#b4b4b4"/></svg>
<div class="a" style="left:1445px;top:64px;width:21px;height:6px;background:repeating-linear-gradient(90deg,#292929 0,#292929 1.1px,transparent 1.1px,transparent 2.35px);"></div>
<div class="dd" style="left:1264px;top:92px;width:164px;height:30px;background:#222;border-color:#6a6a6a;border-radius:4px;"></div>
<div class="t" style="left:1271.5px;top:99.0px;font-size:11px;letter-spacing:0.26px;color:#ececec;">Neutral material</div>
<svg style="left:1413px;top:102px;" width="9" height="6" viewBox="0 0 9 6"><path d="M0.6 0.8 L4.5 4.7 L8.4 0.8" fill="none" stroke="#f4f4f4" stroke-width="2"/></svg>
<svg style="left:1447px;top:89px;" width="16" height="16" viewBox="0 0 16 16"><rect x="0" y="0" width="16.1" height="16.1" fill="#d2d2d2"/><rect x="3.9" y="1.9" width="10.5" height="2" fill="#333"/><rect x="1.5" y="1.9" width="1.8" height="2" fill="#333"/><rect x="3.9" y="7.0" width="10.5" height="2" fill="#333"/><rect x="1.5" y="7.0" width="1.8" height="2" fill="#333"/><rect x="3.9" y="12.1" width="10.5" height="2" fill="#333"/><rect x="1.5" y="12.1" width="1.8" height="2" fill="#333"/></svg>
<div class="a" style="left:696px;top:113px;width:743px;height:343px;background:#4690ec;"></div>
<div class="a" style="left:698px;top:115px;width:739px;height:339px;background:#333333;"></div>
<div class="a" style="left:698px;top:115px;width:739px;height:31px;background:#2b2b2b;"></div>
<div class="t b" style="left:705.0px;top:125.0px;font-size:11px;transform:scaleX(0.9577);transform-origin:0 50%;color:#d6d6d6;">MESH MAP BAKERS</div>
<svg style="left:1386px;top:126px;" width="10" height="10" viewBox="0 0 10 10"><rect x="0.7" y="0.7" width="8.6" height="8.6" fill="none" stroke="#a2a2a2" stroke-width="1.4"/><path d="M3.9 0.7 V9.3 M3.9 5 H9.3" stroke="#a2a2a2" stroke-width="1.4"/></svg>
<svg style="left:1417px;top:127px;" width="9" height="9" viewBox="0 0 9 9"><path d="M0.4 0.4 L8.6 8.6 M8.6 0.4 L0.4 8.6" fill="none" stroke="#d8d8d8" stroke-width="1.2"/></svg>
<svg style="left:1417px;top:156px;" width="13" height="13" viewBox="0 0 13 13"><path d="M0 0.9 H12.4 M0 4.9 H12.4 M0 8.9 H4.8" stroke="#d2d2d2" stroke-width="1.8"/><path d="M6.6 9.2 L9.5 12 L12.4 9.2" stroke="#d2d2d2" stroke-width="1.5" fill="none"/></svg>
<div class="a" style="left:1438px;top:113px;width:33px;height:32px;background:#4690ec;border-radius:0 4px 4px 0;"></div>
<svg style="left:1446px;top:122px;" width="17" height="15" viewBox="0 0 17 15"><path d="M0.8 2 H13.6 M0.8 7 H8.6 M0.8 12 H5.2" stroke="#eaf1fd" stroke-width="1.7"/><g transform="translate(6.6 4.2) scale(0.68)"><path d="M9.44 0.77 L9.61 1.11 L9.75 1.45 L9.87 1.81 L9.96 2.17 L10.03 2.54 L10.08 2.91 L13.66 2.60 L13.16 2.05 L12.59 1.58 L11.96 1.19 L11.27 0.89 L10.49 0.71 L9.44 0.77 Z" fill="#eaf1fd"/><path d="M10.08 3.89 L10.03 4.26 L9.96 4.63 L9.87 4.99 L9.75 5.35 L9.61 5.69 L9.44 6.03 L14.76 8.86 L14.95 8.09 L15.05 7.31 L15.07 6.53 L15.01 5.76 L14.86 5.01 L14.63 4.29 Z" fill="#eaf1fd"/><path d="M8.91 6.85 L8.63 7.18 L8.32 7.50 L7.99 7.78 L7.63 8.04 L7.26 8.27 L6.87 8.48 L9.43 13.97 L10.31 13.68 L11.16 13.28 L11.96 12.77 L12.68 12.18 L13.33 11.49 L13.89 10.74 Z" fill="#eaf1fd"/><path d="M5.95 8.81 L5.66 8.88 L5.38 8.93 L5.09 8.97 L4.79 8.99 L4.50 9.00 L4.21 8.99 L3.99 13.19 L4.50 13.48 L5.04 13.72 L5.61 13.92 L6.19 14.06 L6.79 14.16 L7.39 14.20 Z" fill="#eaf1fd"/><path d="M3.24 8.86 L2.94 8.78 L2.65 8.68 L2.36 8.57 L2.07 8.45 L1.80 8.31 L1.53 8.15 L1.53 8.15 L1.40 9.04 L1.47 9.71 L1.63 10.33 L1.87 10.90 L2.17 11.43 L2.53 11.92 Z" fill="#eaf1fd"/></g></svg>
<div class="a" style="left:698px;top:174.6px;width:739px;height:25.2px;box-sizing:border-box;border:1px solid #4690ec;background:#262626;"></div>
<svg style="left:713px;top:181px;" width="15" height="15" viewBox="0 0 15 15"><path d="M12.54 5.92 L14.48 5.91 L14.48 8.49 L12.54 8.48 L11.94 9.93 L13.32 11.29 L11.49 13.12 L10.13 11.74 L8.68 12.34 L8.69 14.28 L6.11 14.28 L6.12 12.34 L4.67 11.74 L3.31 13.12 L1.48 11.29 L2.86 9.93 L2.26 8.48 L0.32 8.49 L0.32 5.91 L2.26 5.92 L2.86 4.47 L1.48 3.11 L3.31 1.28 L4.67 2.66 L6.12 2.06 L6.11 0.12 L8.69 0.12 L8.68 2.06 L10.13 2.66 L11.49 1.28 L13.32 3.11 L11.94 4.47 Z" fill="#dcc3e8"/><circle cx="7.4" cy="7.2" r="2.7" fill="#3a2f40"/></svg>
<div class="t b" style="left:734.0px;top:181.0px;font-size:11px;transform:scaleX(0.9903);transform-origin:0 50%;color:#f4f4f4;">Common settings</div>
<div class="a" style="left:699px;top:224px;width:738px;height:1px;background:#262626;"></div>
<div class="a" style="left:712px;top:206px;width:13px;height:13px;background:#cdcdcd;border-radius:1.5px;"></div>
<svg style="left:712px;top:206px;" width="13" height="13" viewBox="0 0 13 13"><path d="M2.6 6.6 L5.3 9.4 L10.6 3.2" fill="none" stroke="#2a2a2a" stroke-width="1.9"/></svg>
<svg style="left:731px;top:204px;overflow:hidden;" width="16" height="16" viewBox="0 0 16 16"><g transform="scale(0.4848 0.5333)" fill="none" stroke="#7c76f0" stroke-linecap="round"><path d="M1.8 5.6 Q6 0.4 12 2.6" stroke-width="3.0"/><path d="M1.6 8.6 Q7 9.8 12.6 6.2" stroke-width="2.8"/><path d="M12 2.6 Q13.6 4.4 12.6 6.2" stroke-width="2.4"/><path d="M17.6 1.2 Q21.4 6.8 26 1" stroke-width="2.5"/><path d="M21.6 4.4 Q22 6 23 7.4" stroke-width="2.4"/><path d="M12.6 10.6 Q21 4.6 31 6.4" stroke-width="3.8"/><path d="M31 5 V30" stroke-width="3.4"/><path d="M28.4 12 Q27.6 15 28.6 17.6" stroke-width="2.2"/><path d="M2.4 21.6 Q13 19.6 24.6 12.2" stroke-width="5.6"/><path d="M11.4 11.4 Q14 15.6 9 21" stroke-width="3.4"/><path d="M16 18.4 Q22 19.4 27.6 24.8" stroke-width="3.6"/><path d="M3 29.6 Q7.4 22.6 15 25.4 T27 30.4" stroke-width="3.8"/><path d="M25.6 20.2 L25.8 20.6" stroke-width="3.6"/><path d="M1.6 13.4 Q4.6 12.6 7.2 13.8" stroke-width="2.2"/></g></svg>
<div class="t b" style="left:752.6px;top:206.0px;font-size:11px;letter-spacing:0.12px;color:#dedede;">Normal</div>
<div class="a" style="left:699px;top:249px;width:738px;height:1px;background:#262626;"></div>
<div class="a" style="left:712px;top:231px;width:13px;height:13px;background:#cdcdcd;border-radius:1.5px;"></div>
<svg style="left:712px;top:231px;" width="13" height="13" viewBox="0 0 13 13"><path d="M2.6 6.6 L5.3 9.4 L10.6 3.2" fill="none" stroke="#2a2a2a" stroke-width="1.9"/></svg>
<svg style="left:731px;top:229px;overflow:hidden;" width="16" height="16" viewBox="0 0 16 16"><defs><linearGradient id="wsn" x1="0" y1="0" x2="0" y2="1"><stop offset="0" stop-color="#7e7fe0"/><stop offset="0.55" stop-color="#7f86d8"/><stop offset="0.7" stop-color="#8fa044"/><stop offset="1" stop-color="#a09a30"/></linearGradient></defs><g transform="scale(0.4848 0.5333)" fill="none" stroke="url(#wsn)" stroke-linecap="round"><path d="M1.8 5.6 Q6 0.4 12 2.6" stroke-width="3.0"/><path d="M1.6 8.6 Q7 9.8 12.6 6.2" stroke-width="2.8"/><path d="M12 2.6 Q13.6 4.4 12.6 6.2" stroke-width="2.4"/><path d="M17.6 1.2 Q21.4 6.8 26 1" stroke-width="2.5"/><path d="M21.6 4.4 Q22 6 23 7.4" stroke-width="2.4"/><path d="M12.6 10.6 Q21 4.6 31 6.4" stroke-width="3.8"/><path d="M31 5 V30" stroke-width="3.4"/><path d="M28.4 12 Q27.6 15 28.6 17.6" stroke-width="2.2"/><path d="M2.4 21.6 Q13 19.6 24.6 12.2" stroke-width="5.6"/><path d="M11.4 11.4 Q14 15.6 9 21" stroke-width="3.4"/><path d="M16 18.4 Q22 19.4 27.6 24.8" stroke-width="3.6"/><path d="M3 29.6 Q7.4 22.6 15 25.4 T27 30.4" stroke-width="3.8"/><path d="M25.6 20.2 L25.8 20.6" stroke-width="3.6"/><path d="M1.6 13.4 Q4.6 12.6 7.2 13.8" stroke-width="2.2"/></g></svg>
<div class="t b" style="left:752.6px;top:231.0px;font-size:11px;transform:scaleX(0.9862);transform-origin:0 50%;color:#dedede;">World space normal</div>
<div class="a" style="left:699px;top:274px;width:738px;height:1px;background:#262626;"></div>
<div class="a" style="left:712px;top:256px;width:13px;height:13px;background:#cdcdcd;border-radius:1.5px;"></div>
<svg style="left:712px;top:256px;" width="13" height="13" viewBox="0 0 13 13"><path d="M2.6 6.6 L5.3 9.4 L10.6 3.2" fill="none" stroke="#2a2a2a" stroke-width="1.9"/></svg>
<svg style="left:731px;top:254px;overflow:hidden;" width="16" height="16" viewBox="0 0 16 16"><g transform="scale(0.4848 0.5333)" fill="none" stroke="#8e8e8e" stroke-linecap="round"><path d="M1.8 5.6 Q6 0.4 12 2.6" stroke-width="3.0"/><path d="M1.6 8.6 Q7 9.8 12.6 6.2" stroke-width="2.8"/><path d="M12 2.6 Q13.6 4.4 12.6 6.2" stroke-width="2.4"/><path d="M17.6 1.2 Q21.4 6.8 26 1" stroke-width="2.5"/><path d="M21.6 4.4 Q22 6 23 7.4" stroke-width="2.4"/><path d="M12.6 10.6 Q21 4.6 31 6.4" stroke-width="3.8"/><path d="M31 5 V30" stroke-width="3.4"/><path d="M28.4 12 Q27.6 15 28.6 17.6" stroke-width="2.2"/><path d="M2.4 21.6 Q13 19.6 24.6 12.2" stroke-width="5.6"/><path d="M11.4 11.4 Q14 15.6 9 21" stroke-width="3.4"/><path d="M16 18.4 Q22 19.4 27.6 24.8" stroke-width="3.6"/><path d="M3 29.6 Q7.4 22.6 15 25.4 T27 30.4" stroke-width="3.8"/><path d="M25.6 20.2 L25.8 20.6" stroke-width="3.6"/><path d="M1.6 13.4 Q4.6 12.6 7.2 13.8" stroke-width="2.2"/></g></svg>
<div class="t b" style="left:752.6px;top:256.0px;font-size:11px;transform:scaleX(0.9545);transform-origin:0 50%;color:#dedede;">ID</div>
<div class="a" style="left:699px;top:299px;width:738px;height:1px;background:#262626;"></div>
<div class="a" style="left:712px;top:281px;width:13px;height:13px;background:#cdcdcd;border-radius:1.5px;"></div>
<svg style="left:712px;top:281px;" width="13" height="13" viewBox="0 0 13 13"><path d="M2.6 6.6 L5.3 9.4 L10.6 3.2" fill="none" stroke="#2a2a2a" stroke-width="1.9"/></svg>
<div class="a" style="left:731px;top:279px;width:16px;height:16px;background:#0a0a0a;"></div>
<svg style="left:731px;top:279px;overflow:hidden;" width="16" height="16" viewBox="0 0 16 16"><g transform="scale(0.4848 0.5333)" fill="none" stroke="#f4f4f4" stroke-linecap="round"><path d="M1.8 5.6 Q6 0.4 12 2.6" stroke-width="3.0"/><path d="M1.6 8.6 Q7 9.8 12.6 6.2" stroke-width="2.8"/><path d="M12 2.6 Q13.6 4.4 12.6 6.2" stroke-width="2.4"/><path d="M17.6 1.2 Q21.4 6.8 26 1" stroke-width="2.5"/><path d="M21.6 4.4 Q22 6 23 7.4" stroke-width="2.4"/><path d="M12.6 10.6 Q21 4.6 31 6.4" stroke-width="3.8"/><path d="M31 5 V30" stroke-width="3.4"/><path d="M28.4 12 Q27.6 15 28.6 17.6" stroke-width="2.2"/><path d="M2.4 21.6 Q13 19.6 24.6 12.2" stroke-width="5.6"/><path d="M11.4 11.4 Q14 15.6 9 21" stroke-width="3.4"/><path d="M16 18.4 Q22 19.4 27.6 24.8" stroke-width="3.6"/><path d="M3 29.6 Q7.4 22.6 15 25.4 T27 30.4" stroke-width="3.8"/><path d="M25.6 20.2 L25.8 20.6" stroke-width="3.6"/><path d="M1.6 13.4 Q4.6 12.6 7.2 13.8" stroke-width="2.2"/></g></svg>
<div class="t b" style="left:752.6px;top:281.0px;font-size:11px;transform:scaleX(0.9806);transform-origin:0 50%;color:#dedede;">Ambient occlusion</div>
<div class="a" style="left:699px;top:324px;width:738px;height:1px;background:#262626;"></div>
<div class="a" style="left:712px;top:306px;width:13px;height:13px;background:#cdcdcd;border-radius:1.5px;"></div>
<svg style="left:712px;top:306px;" width="13" height="13" viewBox="0 0 13 13"><path d="M2.6 6.6 L5.3 9.4 L10.6 3.2" fill="none" stroke="#2a2a2a" stroke-width="1.9"/></svg>
<div class="a" style="left:731px;top:304px;width:16px;height:16px;background:#8a8a8a;"></div>
<div class="t b" style="left:752.6px;top:306.0px;font-size:11px;transform:scaleX(0.9718);transform-origin:0 50%;color:#dedede;">Curvature</div>
<div class="a" style="left:699px;top:349px;width:738px;height:1px;background:#262626;"></div>
<div class="a" style="left:712px;top:331px;width:13px;height:13px;background:#cdcdcd;border-radius:1.5px;"></div>
<svg style="left:712px;top:331px;" width="13" height="13" viewBox="0 0 13 13"><path d="M2.6 6.6 L5.3 9.4 L10.6 3.2" fill="none" stroke="#2a2a2a" stroke-width="1.9"/></svg>
<svg style="left:731px;top:329px;overflow:hidden;" width="16" height="16" viewBox="0 0 16 16"><defs><linearGradient id="posg" x1="0" y1="0" x2="1" y2="1"><stop offset="0" stop-color="#d8b090"/><stop offset="0.3" stop-color="#b08868"/><stop offset="0.5" stop-color="#3f6f92"/><stop offset="0.75" stop-color="#4a7898"/><stop offset="1" stop-color="#d89070"/></linearGradient></defs><g transform="scale(0.4848 0.5333)" fill="none" stroke="url(#posg)" stroke-linecap="round"><path d="M1.8 5.6 Q6 0.4 12 2.6" stroke-width="3.0"/><path d="M1.6 8.6 Q7 9.8 12.6 6.2" stroke-width="2.8"/><path d="M12 2.6 Q13.6 4.4 12.6 6.2" stroke-width="2.4"/><path d="M17.6 1.2 Q21.4 6.8 26 1" stroke-width="2.5"/><path d="M21.6 4.4 Q22 6 23 7.4" stroke-width="2.4"/><path d="M12.6 10.6 Q21 4.6 31 6.4" stroke-width="3.8"/><path d="M31 5 V30" stroke-width="3.4"/><path d="M28.4 12 Q27.6 15 28.6 17.6" stroke-width="2.2"/><path d="M2.4 21.6 Q13 19.6 24.6 12.2" stroke-width="5.6"/><path d="M11.4 11.4 Q14 15.6 9 21" stroke-width="3.4"/><path d="M16 18.4 Q22 19.4 27.6 24.8" stroke-width="3.6"/><path d="M3 29.6 Q7.4 22.6 15 25.4 T27 30.4" stroke-width="3.8"/><path d="M25.6 20.2 L25.8 20.6" stroke-width="3.6"/><path d="M1.6 13.4 Q4.6 12.6 7.2 13.8" stroke-width="2.2"/></g></svg>
<div class="t b" style="left:752.6px;top:331.0px;font-size:11px;transform:scaleX(0.9795);transform-origin:0 50%;color:#dedede;">Position</div>
<div class="a" style="left:699px;top:374px;width:738px;height:1px;background:#262626;"></div>
<div class="a" style="left:712px;top:356px;width:13px;height:13px;background:#cdcdcd;border-radius:1.5px;"></div>
<svg style="left:712px;top:356px;" width="13" height="13" viewBox="0 0 13 13"><path d="M2.6 6.6 L5.3 9.4 L10.6 3.2" fill="none" stroke="#2a2a2a" stroke-width="1.9"/></svg>
<div class="a" style="left:731px;top:354px;width:16px;height:16px;background:#0a0a0a;"></div>
<svg style="left:731px;top:354px;overflow:hidden;" width="16" height="16" viewBox="0 0 16 16"><g transform="scale(0.4848 0.5333)" fill="none" stroke="#f4f4f4" stroke-linecap="round"><path d="M1.8 5.6 Q6 0.4 12 2.6" stroke-width="3.0"/><path d="M1.6 8.6 Q7 9.8 12.6 6.2" stroke-width="2.8"/><path d="M12 2.6 Q13.6 4.4 12.6 6.2" stroke-width="2.4"/><path d="M17.6 1.2 Q21.4 6.8 26 1" stroke-width="2.5"/><path d="M21.6 4.4 Q22 6 23 7.4" stroke-width="2.4"/><path d="M12.6 10.6 Q21 4.6 31 6.4" stroke-width="3.8"/><path d="M31 5 V30" stroke-width="3.4"/><path d="M28.4 12 Q27.6 15 28.6 17.6" stroke-width="2.2"/><path d="M2.4 21.6 Q13 19.6 24.6 12.2" stroke-width="5.6"/><path d="M11.4 11.4 Q14 15.6 9 21" stroke-width="3.4"/><path d="M16 18.4 Q22 19.4 27.6 24.8" stroke-width="3.6"/><path d="M3 29.6 Q7.4 22.6 15 25.4 T27 30.4" stroke-width="3.8"/><path d="M25.6 20.2 L25.8 20.6" stroke-width="3.6"/><path d="M1.6 13.4 Q4.6 12.6 7.2 13.8" stroke-width="2.2"/></g></svg>
<div class="t b" style="left:752.6px;top:356.0px;font-size:11px;transform:scaleX(0.9200);transform-origin:0 50%;color:#dedede;">Thickness</div>
<div class="a" style="left:699px;top:399px;width:738px;height:1px;background:#262626;"></div>
<div class="a" style="left:712px;top:381px;width:13px;height:13px;background:#cdcdcd;border-radius:1.5px;"></div>
<svg style="left:712px;top:381px;" width="13" height="13" viewBox="0 0 13 13"><path d="M2.6 6.6 L5.3 9.4 L10.6 3.2" fill="none" stroke="#2a2a2a" stroke-width="1.9"/></svg>
<svg style="left:731px;top:379px;" width="16" height="16" viewBox="0 0 16 16"><rect x="0.5" y="0.5" width="15" height="15" fill="none" stroke="#545454" stroke-width="1"/><path d="M1 1 L15 15" stroke="#727272" stroke-width="1.6"/></svg>
<div class="t b" style="left:752.6px;top:381.0px;font-size:11px;letter-spacing:0.06px;color:#dedede;">Height</div>
<div class="a" style="left:699px;top:424px;width:738px;height:1px;background:#262626;"></div>
<div class="a" style="left:712px;top:406px;width:13px;height:13px;box-sizing:border-box;border:2px solid #9a9a9a;border-radius:1.5px;"></div>
<svg style="left:731px;top:404px;" width="16" height="16" viewBox="0 0 16 16"><rect x="0.5" y="0.5" width="15" height="15" fill="none" stroke="#545454" stroke-width="1"/><path d="M1 1 L15 15" stroke="#727272" stroke-width="1.6"/></svg>
<div class="t b" style="left:752.6px;top:406.0px;font-size:11px;transform:scaleX(0.9744);transform-origin:0 50%;color:#dedede;">Bent normals</div>
<div class="a" style="left:699px;top:449px;width:738px;height:1px;background:#262626;"></div>
<div class="a" style="left:712px;top:431px;width:13px;height:13px;box-sizing:border-box;border:2px solid #9a9a9a;border-radius:1.5px;"></div>
<svg style="left:731px;top:429px;" width="16" height="16" viewBox="0 0 16 16"><rect x="0.5" y="0.5" width="15" height="15" fill="none" stroke="#545454" stroke-width="1"/><path d="M1 1 L15 15" stroke="#727272" stroke-width="1.6"/></svg>
<div class="t b" style="left:752.6px;top:431.0px;font-size:11px;transform:scaleX(0.9541);transform-origin:0 50%;color:#dedede;">Opacity</div>
<svg style="left:1446px;top:153.5px;" width="17" height="16" viewBox="0 0 17 16"><g transform="translate(1.4 0.4) scale(0.72)"><path d="M9.44 0.77 L9.61 1.11 L9.75 1.45 L9.87 1.81 L9.96 2.17 L10.03 2.54 L10.08 2.91 L13.66 2.60 L13.16 2.05 L12.59 1.58 L11.96 1.19 L11.27 0.89 L10.49 0.71 L9.44 0.77 Z" fill="#d2d2d2"/><path d="M10.08 3.89 L10.03 4.26 L9.96 4.63 L9.87 4.99 L9.75 5.35 L9.61 5.69 L9.44 6.03 L14.76 8.86 L14.95 8.09 L15.05 7.31 L15.07 6.53 L15.01 5.76 L14.86 5.01 L14.63 4.29 Z" fill="#d2d2d2"/><path d="M8.91 6.85 L8.63 7.18 L8.32 7.50 L7.99 7.78 L7.63 8.04 L7.26 8.27 L6.87 8.48 L9.43 13.97 L10.31 13.68 L11.16 13.28 L11.96 12.77 L12.68 12.18 L13.33 11.49 L13.89 10.74 Z" fill="#d2d2d2"/><path d="M5.95 8.81 L5.66 8.88 L5.38 8.93 L5.09 8.97 L4.79 8.99 L4.50 9.00 L4.21 8.99 L3.99 13.19 L4.50 13.48 L5.04 13.72 L5.61 13.92 L6.19 14.06 L6.79 14.16 L7.39 14.20 Z" fill="#d2d2d2"/><path d="M3.24 8.86 L2.94 8.78 L2.65 8.68 L2.36 8.57 L2.07 8.45 L1.80 8.31 L1.53 8.15 L1.53 8.15 L1.40 9.04 L1.47 9.71 L1.63 10.33 L1.87 10.90 L2.17 11.43 L2.53 11.92 Z" fill="#d2d2d2"/></g><circle cx="12.4" cy="11.4" r="5.4" fill="#333"/><path d="M15.70 10.58 L16.93 10.57 L16.93 12.23 L15.70 12.22 L15.31 13.15 L16.18 14.02 L15.02 15.18 L14.15 14.31 L13.22 14.70 L13.23 15.93 L11.57 15.93 L11.58 14.70 L10.65 14.31 L9.78 15.18 L8.62 14.02 L9.49 13.15 L9.10 12.22 L7.87 12.23 L7.87 10.57 L9.10 10.58 L9.49 9.65 L8.62 8.78 L9.78 7.62 L10.65 8.49 L11.58 8.10 L11.57 6.87 L13.23 6.87 L13.22 8.10 L14.15 8.49 L15.02 7.62 L16.18 8.78 L15.31 9.65 Z" fill="#d2d2d2"/><circle cx="12.4" cy="11.4" r="2.3" fill="#333"/></svg>
<svg style="left:1447px;top:185.5px;" width="16" height="16" viewBox="0 0 16 16"><rect x="0.65" y="1.6" width="13.5" height="13.4" rx="1.2" fill="none" stroke="#d2d2d2" stroke-width="1.3"/><path d="M4 0 V2 M7.4 0 V2 M10.8 0 V2" stroke="#d2d2d2" stroke-width="1.1"/><path d="M3.4 5.4 H10.6 M3.4 8.2 H7.6 M3.4 11 H6" stroke="#d2d2d2" stroke-width="1.2"/><rect x="6.6" y="6.8" width="10" height="10" fill="#333"/><g transform="translate(6.2 6.4) scale(0.68)"><path d="M9.44 0.77 L9.61 1.11 L9.75 1.45 L9.87 1.81 L9.96 2.17 L10.03 2.54 L10.08 2.91 L13.66 2.60 L13.16 2.05 L12.59 1.58 L11.96 1.19 L11.27 0.89 L10.49 0.71 L9.44 0.77 Z" fill="#d2d2d2"/><path d="M10.08 3.89 L10.03 4.26 L9.96 4.63 L9.87 4.99 L9.75 5.35 L9.61 5.69 L9.44 6.03 L14.76 8.86 L14.95 8.09 L15.05 7.31 L15.07 6.53 L15.01 5.76 L14.86 5.01 L14.63 4.29 Z" fill="#d2d2d2"/><path d="M8.91 6.85 L8.63 7.18 L8.32 7.50 L7.99 7.78 L7.63 8.04 L7.26 8.27 L6.87 8.48 L9.43 13.97 L10.31 13.68 L11.16 13.28 L11.96 12.77 L12.68 12.18 L13.33 11.49 L13.89 10.74 Z" fill="#d2d2d2"/><path d="M5.95 8.81 L5.66 8.88 L5.38 8.93 L5.09 8.97 L4.79 8.99 L4.50 9.00 L4.21 8.99 L3.99 13.19 L4.50 13.48 L5.04 13.72 L5.61 13.92 L6.19 14.06 L6.79 14.16 L7.39 14.20 Z" fill="#d2d2d2"/><path d="M3.24 8.86 L2.94 8.78 L2.65 8.68 L2.36 8.57 L2.07 8.45 L1.80 8.31 L1.53 8.15 L1.53 8.15 L1.40 9.04 L1.47 9.71 L1.63 10.33 L1.87 10.90 L2.17 11.43 L2.53 11.92 Z" fill="#d2d2d2"/></g></svg>
<svg style="left:1447px;top:218.3px;" width="16" height="15" viewBox="0 0 16 15"><rect x="0" y="0" width="16" height="11.3" rx="1" fill="#d2d2d2"/><path d="M10.51 4.93 L11.63 4.88 L11.63 6.32 L10.51 6.27 L10.25 6.91 L11.08 7.66 L10.06 8.68 L9.31 7.85 L8.67 8.11 L8.72 9.23 L7.28 9.23 L7.33 8.11 L6.69 7.85 L5.94 8.68 L4.92 7.66 L5.75 6.91 L5.49 6.27 L4.37 6.32 L4.37 4.88 L5.49 4.93 L5.75 4.29 L4.92 3.54 L5.94 2.52 L6.69 3.35 L7.33 3.09 L7.28 1.97 L8.72 1.97 L8.67 3.09 L9.31 3.35 L10.06 2.52 L11.08 3.54 L10.25 4.29 Z" fill="#333"/><circle cx="8" cy="5.6" r="1.4" fill="#d2d2d2"/><rect x="5" y="13.2" width="6" height="1.5" fill="#d2d2d2"/></svg>
<svg style="left:1447.4px;top:249.4px;" width="15" height="16" viewBox="0 0 15 16"><rect x="0.65" y="1.6" width="13.5" height="13.4" rx="1.2" fill="none" stroke="#d2d2d2" stroke-width="1.3"/><path d="M4 0 V2 M7.4 0 V2 M10.8 0 V2" stroke="#d2d2d2" stroke-width="1.1"/><path d="M4 5.6 H10.8 M4 8.4 H10.8 M4 11.2 H10.8" stroke="#d2d2d2" stroke-width="1.3"/></svg>
<svg style="left:1446.6px;top:280.2px;" width="17" height="17" viewBox="0 0 17 17"><path d="M2.5 12.4 A7.1 7.1 0 1 0 2.3 4.6" fill="none" stroke="#d2d2d2" stroke-width="1.4"/><path d="M2.3 4.6 A7.1 7.1 0 0 0 1.7 9.8" fill="none" stroke="#d2d2d2" stroke-width="1.4"/><path d="M-0.2 10.2 L4.6 9.8 L2.4 14.2 Z" fill="#d2d2d2"/><path d="M8.5 3.8 V8.5 L11.5 11.3" fill="none" stroke="#d2d2d2" stroke-width="1.4"/></svg>
<div class="or" style="left:700.6px;top:372.9px;width:124.5px;height:30.1px;border-width:6.5px;border-radius:6.5px;"></div>
<div class="num" style="left:672.3px;top:368.2px;font-size:41.5px;line-height:41.5px;-webkit-text-stroke:0.5px #f5a01d;">4</div>
<div class="num" style="left:1485.6px;top:128.1px;font-size:40px;line-height:40px;transform:scaleX(0.93);transform-origin:0 0;-webkit-text-stroke:0.5px #f5a01d;">3</div>
<svg style="left:1460px;top:105px;" width="60" height="40" viewBox="0 0 60 40"><path d="M55.4 10.3 L8.5 31.9" stroke="#f5a01d" stroke-width="3.3" fill="none"/><path d="M15.2 19.9 L8.5 31.9 L21.6 31.9" stroke="#f5a01d" stroke-width="3.6" fill="none" stroke-linecap="round" stroke-linejoin="round"/></svg>
<div class="a" style="left:1516px;top:91px;width:117px;height:38px;background:#353535;"></div>
<div class="t" style="left:1528.5px;top:104.0px;font-size:11px;letter-spacing:0.36px;color:#d2d2d2;">Mesh map bakers</div>
</body>
</html>
